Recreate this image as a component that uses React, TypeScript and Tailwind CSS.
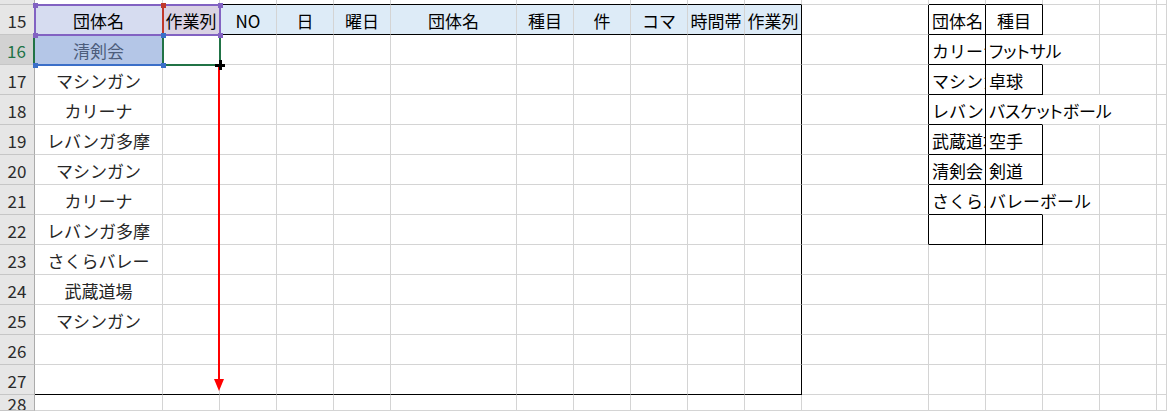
import clsx from "clsx";

const ROWS = [14, 15, 16, 17, 18, 19, 20, 21, 22, 23, 24, 25, 26, 27, 28];
const NCOLS = 18;

// 見出し行（15行目）
const HEAD: Record<number, string> = {
  1: "団体名",
  2: "作業列",
  3: "NO",
  4: "日",
  5: "曜日",
  6: "団体名",
  7: "種目",
  8: "件",
  9: "コマ",
  10: "時間帯",
  11: "作業列",
};

const COL_A = [
  "清剣会",
  "マシンガン",
  "カリーナ",
  "レバンガ多摩",
  "マシンガン",
  "カリーナ",
  "レバンガ多摩",
  "さくらバレー",
  "武蔵道場",
  "マシンガン",
];

// 右側の対応表（M15:N22）
const LOOKUP: [string, string][] = [
  ["団体名", "種目"],
  ["カリーナ", "フットサル"],
  ["マシンガン", "卓球"],
  ["レバンガ多摩", "バスケットボール"],
  ["武蔵道場", "空手"],
  ["清剣会", "剣道"],
  ["さくらバレー", "バレーボール"],
  ["", ""],
];

const OVERFLOW_ROWS = [16, 18, 21];

function rightBorder(r: number, c: number) {
  if ((c === 14 && OVERFLOW_ROWS.includes(r)) || (c === 15 && r === 18)) return "border-r-transparent";
  if (c === 11 && r >= 15 && r <= 27) return "border-r-black";
  if ((c === 12 || c === 13 || c === 14) && r >= 15 && r <= 22) return "border-r-black";
  return "border-r-[#d4d4d4]";
}

function bottomBorder(r: number, c: number) {
  if (r === 14 && c >= 1 && c <= 11) return "border-b-black";
  if (r === 15 && c >= 3 && c <= 11) return "border-b-black";
  if (r === 27 && c >= 1 && c <= 11) return "border-b-black";
  if (r >= 14 && r <= 22 && (c === 13 || c === 14)) return "border-b-black";
  return "border-b-[#d4d4d4]";
}

function RowHeader({ r }: { r: number }) {
  const active = r === 16;
  return (
    <div
      className={clsx(
        "flex items-center justify-center overflow-hidden border-b border-b-[#c6c6c6] pt-[2px] text-[17px] leading-none",
        active
          ? "border-r-2 border-r-[#217346] bg-[#d2d2d2] text-[#217346]"
          : "border-r border-r-[#ababab] bg-[#e6e6e6] text-[#2b2b2b]",
      )}
    >
      {r === 14 ? "" : r}
    </div>
  );
}

function Cell({ r, c }: { r: number; c: number }) {
  let text = "";
  let bg = "";
  let color = "text-black";
  let align = "justify-center";
  let extra = "";

  if (r === 15 && HEAD[c]) {
    text = HEAD[c];
    if (c === 1) bg = "bg-[#d6dcf0]";
    else if (c === 2) bg = "bg-[#d9d2e3]";
    else bg = "bg-[#ddebf7]";
  }
  if (c === 1 && r >= 16 && r <= 25) {
    text = COL_A[r - 16];
    color = r === 16 ? "text-[#4d5d7c]" : "text-[#262626]";
    if (r === 16) bg = "bg-[#b4c6e7]";
  }
  if ((c === 13 || c === 14) && r >= 15 && r <= 22) {
    text = LOOKUP[r - 15][c - 13];
    const centered = r === 15 && c === 14;
    align = centered ? "justify-center" : "justify-start pl-[3px]";
    if (c === 13) extra = "overflow-hidden";
    if (c === 14 && OVERFLOW_ROWS.includes(r)) extra = "relative z-10 overflow-visible";
    if (c === 14 && (r === 16 || r === 18)) extra += " [font-feature-settings:'palt']";
  }

  return (
    <div
      className={clsx(
        "flex items-center whitespace-nowrap border-r border-b pt-[2px] text-[17px] leading-none",
        rightBorder(r, c),
        bottomBorder(r, c),
        bg,
        color,
        align,
        extra,
      )}
    >
      {text}
    </div>
  );
}

function Line({ className }: { className: string }) {
  return <div className={clsx("absolute z-20", className)} />;
}

export default function App() {
  return (
    <div className="relative h-[411px] w-[1167px] overflow-hidden bg-white font-['Noto_Sans_CJK_JP',sans-serif]">
      <div className="grid h-full grid-cols-[35px_128px_57px_57px_57px_57px_126px_57px_57px_57px_57px_57px_127px_57px_57px_57px_57px_1fr] grid-rows-[5px_repeat(13,30px)_1fr]">
        {ROWS.map((r) =>
          Array.from({ length: NCOLS }, (_, c) =>
            c === 0 ? <RowHeader key={`${r}-${c}`} r={r} /> : <Cell key={`${r}-${c}`} r={r} c={c} />,
          ),
        )}
      </div>

      {/* 参照範囲（紫・赤・青）とアクティブセル（緑） */}
      <Line className="left-[34px] top-[4px] h-[2px] w-[187px] bg-[#8262c2]" />
      <Line className="left-[34px] top-[34px] h-[2px] w-[187px] bg-[#8262c2]" />
      <Line className="left-[34px] top-[4px] h-[32px] w-[2px] bg-[#8262c2]" />
      <Line className="left-[219px] top-[4px] h-[32px] w-[2px] bg-[#8262c2]" />
      <Line className="left-[162px] top-[4px] h-[32px] w-[2px] bg-[#c0392b]" />
      <Line className="left-[34px] top-[64px] h-[2px] w-[130px] bg-[#3b6fc8]" />
      <Line className="left-[162px] top-[36px] h-[30px] w-[2px] bg-[#217346]" />
      <Line className="left-[162px] top-[64px] h-[2px] w-[59px] bg-[#217346]" />
      <Line className="left-[219px] top-[36px] h-[30px] w-[2px] bg-[#217346]" />

      {/* 角のハンドル */}
      <Line className="left-[33px] top-[3px] h-[5px] w-[5px] bg-[#8262c2]" />
      <Line className="left-[218px] top-[3px] h-[5px] w-[5px] bg-[#8262c2]" />
      <Line className="left-[33px] top-[33px] h-[5px] w-[5px] bg-[#8262c2]" />
      <Line className="left-[218px] top-[33px] h-[5px] w-[5px] bg-[#8262c2]" />
      <Line className="left-[161px] top-[3px] h-[5px] w-[5px] bg-[#c0392b]" />
      <Line className="left-[161px] top-[33px] h-[5px] w-[5px] bg-[#3b6fc8]" />
      <Line className="left-[33px] top-[63px] h-[5px] w-[5px] bg-[#3b6fc8]" />
      <Line className="left-[161px] top-[63px] h-[5px] w-[5px] bg-[#3b6fc8]" />

      {/* 赤い矢印 */}
      <svg className="absolute left-[213px] top-[66px] z-20" width="12" height="326" viewBox="0 0 12 326">
        <line x1="6" y1="0" x2="6" y2="316" stroke="#ff0000" strokeWidth="2" />
        <polygon points="1,313 11,313 6,325" fill="#ff0000" />
      </svg>

      {/* フィルハンドル上の十字カーソル */}
      <Line className="left-[215px] top-[64px] h-[3px] w-[10px] bg-black" />
      <Line className="left-[219px] top-[60px] h-[10px] w-[3px] bg-black" />
    </div>
  );
}
